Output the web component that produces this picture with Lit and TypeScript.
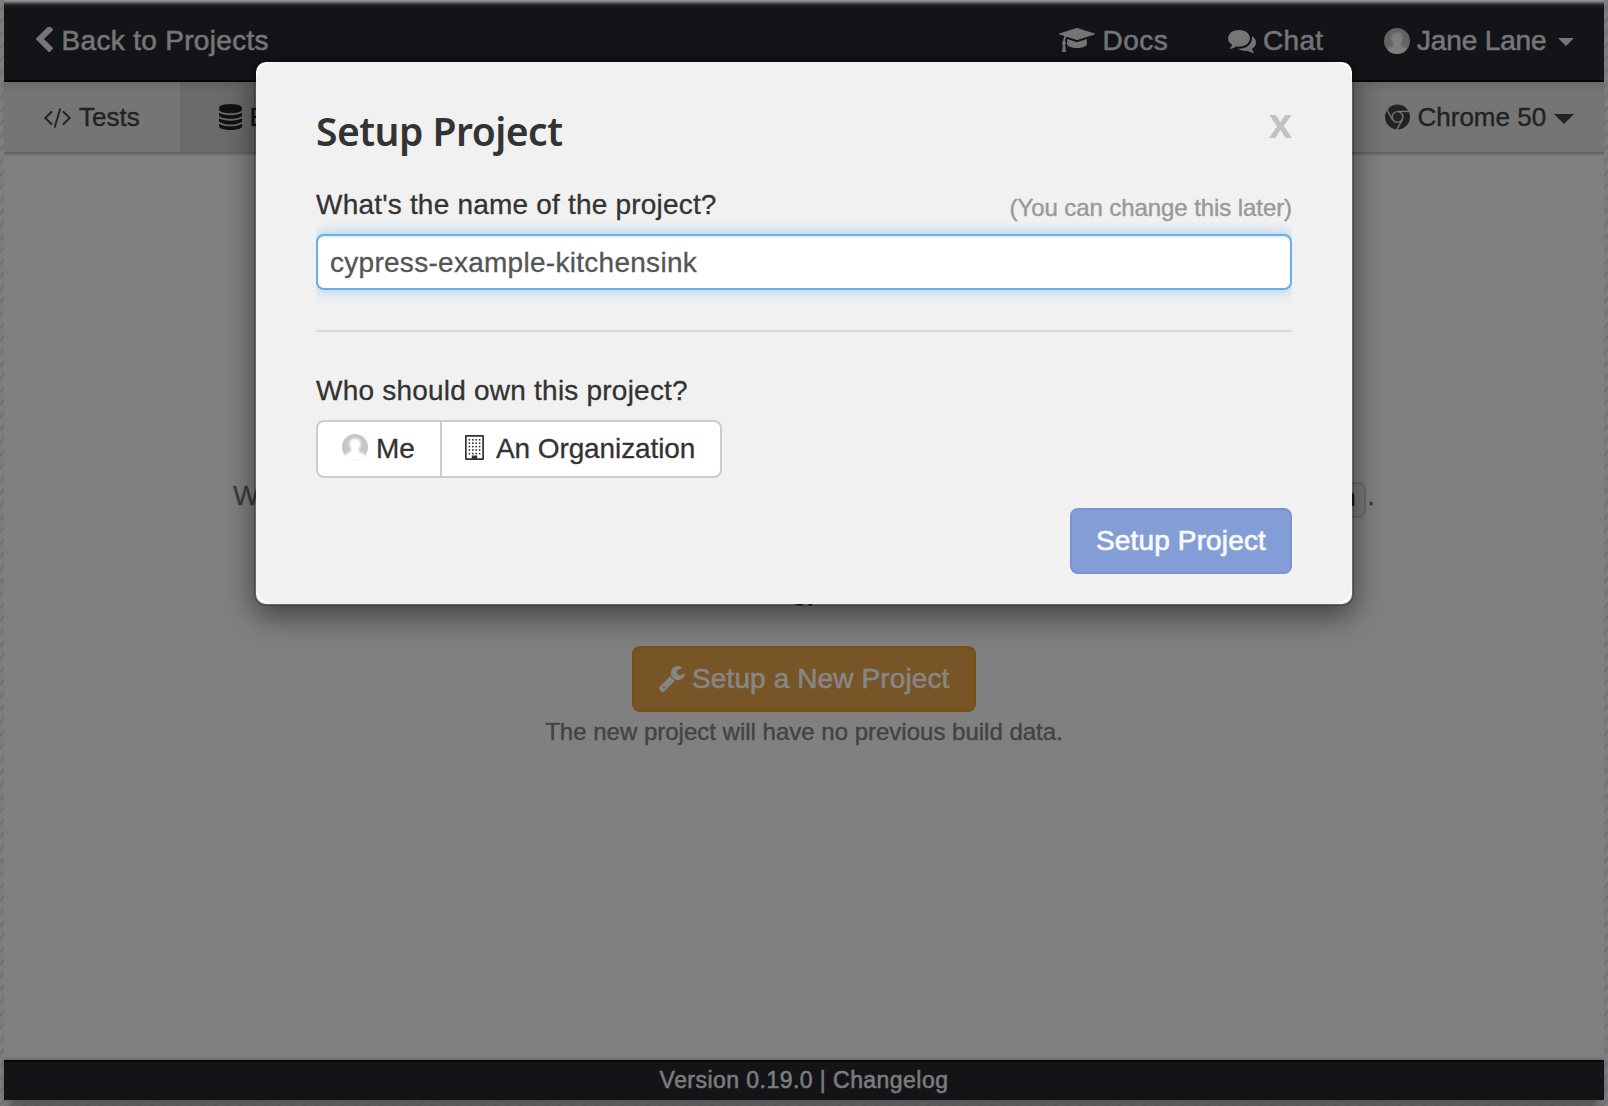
import { LitElement, html, css, svg } from "lit";
import { customElement, property } from "lit/decorators.js";

const ICONS: Record<string, { box: string; d: string }> = {
  back: {
    box: "410 90 1037 1612",
    d: "M1427 301l-531 531 531 531q19 19 19 45t-19 45l-166 166q-19 19-45 19t-45-19l-742-742q-19-19-19-45t19-45l742-742q19-19 45-19t45 19l166 166q19 19 19 45t-19 45z",
  },
  code: {
    box: "-20 256 1832 1408",
    d: "M553 1399l-50 50q-10 10-23 10t-23-10l-466-466q-10-10-10-23t10-23l466-466q10-10 23-10t23 10l50 50q10 10 10 23t-10 23l-393 393 393 393q10 10 10 23t-10 23zm591-1067l-373 1291q-4 13-15.5 19.5t-23.5 2.5l-62-17q-13-4-19.5-15.5t-2.5-24.5l373-1291q4-13 15.5-19.5t23.5-2.5l62 17q13 4 19.5 15.5t2.5 24.5zm657 651l-466 466q-10 10-23 10t-23-10l-50-50q-10-10-10-23t10-23l393-393-393-393q-10-10-10-23t10-23l50-50q10-10 23-10t23 10l466 466q10 10 10 23t-10 23z",
  },
  database: {
    box: "128 0 1536 1792",
    d: "M896 768q237 0 443-43t325-127v170q0 69-103 128t-280 93.5-385 34.5-385-34.5-280-93.5-103-128v-170q119 84 325 127t443 43zm0 768q237 0 443-43t325-127v170q0 69-103 128t-280 93.5-385 34.5-385-34.5-280-93.5-103-128v-170q119 84 325 127t443 43zm0-384q237 0 443-43t325-127v170q0 69-103 128t-280 93.5-385 34.5-385-34.5-280-93.5-103-128v-170q119 84 325 127t443 43zm0-1152q208 0 385 34.5t280 93.5 103 128v128q0 69-103 128t-280 93.5-385 34.5-385-34.5-280-93.5-103-128v-128q0-69 103-128t280-93.5 385-34.5z",
  },
  docs: {
    box: "0 128 2304 1536",
    d: "M1774 836l18 316q4 69-82 128t-235 93.5-323 34.5-323-34.5-235-93.5-82-128l18-316 574 181q22 7 48 7t48-7zM2304 512q0 23-22 31l-1120 352q-4 1-10 1t-10-1l-652-206q-43 34-71 111.5t-34 178.5q63 36 63 109 0 69-58 107l58 433q2 14-8 25-9 11-24 11h-192q-15 0-24-11-10-11-8-25l58-433q-58-38-58-107 0-73 65-111 11-207 98-330l-333-104q-22-8-22-31t22-31l1120-352q4-1 10-1t10 1l1120 352q22 8 22 31z",
  },
  chat: {
    box: "0 256 1792 1408",
    d: "M1408 768q0 139-94 257t-256.5 186.5-353.5 68.5q-86 0-176-16-124 88-278 128-36 9-86 16h-3q-11 0-20.5-8t-11.5-21q-1-3-1-6.5t.5-6.5 2-6l2.5-5 3.5-5.5 4-5 4.5-5 4-4.5q5-6 23-25t26-29.5 22.5-29 25-38.5 20.5-44q-124-72-195-177t-71-224q0-139 94-257t256.5-186.5 353.5-68.5 353.5 68.5 256.5 186.5 94 257zm384 256q0 120-71 224.5t-195 176.5q10 24 20.5 44t25 38.5 22.5 29 26 29.5 23 25q1 1 4 4.5t4.5 5 4 5 3.5 5.5l2.5 5 2 6 .5 6.5-1 6.5q-3 14-13 22t-22 7q-50-7-86-16-154-40-278-128-90 16-176 16-271 0-472-132 58 4 88 4 161 0 309-45t264-129q125-92 192-212t67-254q0-77-23-152 129 71 204 178t75 230z",
  },
  wrench: {
    box: "85 128 1641 1643",
    d: "M448 1472q0-26-19-45t-45-19-45 19-19 45 19 45 45 19 45-19 19-45zm644-420l-682 682q-37 37-90 37-52 0-91-37l-106-108q-38-36-38-90 0-53 38-91l681-681q39 98 114.5 173.5t173.5 114.5zm634-435q0 39-23 106-47 134-164.5 217.5t-258.5 83.5q-185 0-316.5-131.5t-131.5-316.5 131.5-316.5 316.5-131.5q58 0 121.5 16.5t107.5 46.5q16 11 16 28t-16 28l-293 169v224l193 107q5-3 79-48.5t135.5-81 70.5-35.5q15 0 23.5 10t8.5 25z",
  },
  caret: { box: "0 0 20 10", d: "M0 0H20L10 10z" },
};

@customElement("ui-icon")
export class UiIcon extends LitElement {
  @property() name = "";

  static styles = css`
    :host { display: block; flex: none; }
    .glyph { display: block; width: 100%; height: 100%; fill: currentColor; stroke: none; }
    .gaps { fill: none; stroke: #757575; stroke-width: 1.5; }
  `;

  render() {
    if (this.name === "chrome") {
      return html`<svg class="glyph" viewBox="0 0 26 26">
        <circle cx="13" cy="13" r="13"></circle>
        <g class="gaps">
          <circle cx="13" cy="13" r="5.6"></circle>
          ${[0, 120, 240].map((a) => svg`<path d="M13 7.2H26" transform="rotate(${a} 13 13)"></path>`)}
        </g>
      </svg>`;
    }
    if (this.name === "building") {
      const cols = [4.4, 7.8, 11.2, 14.6];
      const rows = [4.8, 8.2, 11.6, 15, 18.6];
      return html`<svg class="glyph" viewBox="0 0 19 25">
        <path d="M0 1a1 1 0 0 1 1-1H18a1 1 0 0 1 1 1V24a1 1 0 0 1-1 1H1a1 1 0 0 1-1-1zM1.7 1.7V23.3H6.8V20.5H12.2V23.3H17.3V1.7z" fill-rule="evenodd"></path>
        ${rows.map((y) => cols.map((x) => svg`<rect x=${x - 0.8} y=${y - 0.8} width="1.6" height="1.6"></rect>`))}
      </svg>`;
    }
    const icon = ICONS[this.name];
    if (!icon) return html``;
    return html`<svg class="glyph" viewBox=${icon.box} preserveAspectRatio="none"><path d=${icon.d}></path></svg>`;
  }
}

@customElement("user-avatar")
export class UserAvatar extends LitElement {
  static styles = css`
    :host { display: block; flex: none; width: 26px; height: 26px; border-radius: 50%; overflow: hidden; }
    .pic { display: block; width: 100%; height: 100%; stroke: none; }
    .back { fill: var(--avatar-back); }
    .person { fill: var(--avatar-person); filter: blur(0.8px); }
  `;

  render() {
    return html`<svg class="pic" viewBox="0 0 26 26">
      <rect class="back" width="26" height="26"></rect>
      <path class="person" d="M13 4.5C17 4.5 18.8 7.2 18.6 10.5C18.4 13 17.2 14.2 16.6 15.6C16.6 17.6 18 18.2 20.5 19.2C23 20.2 24 22 24.5 27H1.5C2 22 3 20.2 5.5 19.2C8 18.2 9.4 17.6 9.4 15.6C8.8 14.2 7.6 13 7.4 10.5C7.2 7.2 9 4.5 13 4.5z"></path>
    </svg>`;
  }
}

@customElement("app-root")
export class AppRoot extends LitElement {
  static styles = css`
    :host {
      display: block;
      position: relative;
      box-sizing: border-box;
      width: 1608px;
      height: 1106px;
      padding: 0 4px 6px;
      overflow: hidden;
      font: 28px/40px "Liberation Sans", Arial, sans-serif;
      color: #333;
      background:
        linear-gradient(90deg, rgba(70, 70, 70, 0) 2px, rgba(70, 70, 70, 0.6) 16px 1592px, rgba(70, 70, 70, 0) 1606px) 0 1100px / 100% 6px no-repeat,
        repeating-linear-gradient(135deg, #7e7e7e 0 5px, #747474 6px 8px, #7e7e7e 9px);
    }
    * { box-sizing: border-box; }
    .window { display: flex; flex-direction: column; height: 1100px; background: #808080; }
    .text { white-space: nowrap; }

    .navbar {
      display: flex;
      align-items: center;
      height: 82px;
      flex: none;
      padding: 1px 30px 0 32px;
      border-bottom: 2px solid #070708;
      color: #757678;
      -webkit-text-stroke: 0.6px #757678;
      background: linear-gradient(#98999b 0, #77787a 2px, #333438 4px, #1a1b1f 6px, #131418 9px);
    }
    .nav-back { display: flex; align-items: center; gap: 8.5px; letter-spacing: 0.32px; margin-right: auto; }
    .ico-back { width: 17px; height: 26px; margin-top: -2px; }
    .nav-item { display: flex; align-items: center; }
    .nav-docs { gap: 7.5px; width: 168.5px; letter-spacing: 0.5px; }
    .ico-docs { width: 36px; height: 24px; margin-top: -1px; }
    .nav-chat { gap: 7.5px; width: 156.5px; letter-spacing: 0.3px; }
    .ico-chat { width: 28px; height: 23px; margin-top: 1px; }
    .nav-user { gap: 7px; width: 190px; letter-spacing: -0.15px; }
    .nav-user .ico-caret { width: 16px; height: 8px; margin: 3px 0 0 auto; }
    .dim { --avatar-back: #636363; --avatar-person: #7f7f7f; margin-top: 1px; }

    .tabs {
      display: flex;
      height: 72px;
      flex: none;
      border-bottom: 2px solid #646464;
      font-size: 26px;
      color: #222;
      -webkit-text-stroke: 0.4px #222;
      background: linear-gradient(#6a6a6a, #757575 10px);
      box-shadow: 0 1px 2px rgba(0, 0, 0, 0.12);
    }
    .tab { display: flex; align-items: center; }
    .tab-tests { width: 176px; padding-left: 40px; gap: 8px; }
    .ico-code { width: 27px; height: 20px; margin-top: 1px; }
    .tab-builds { width: 180px; padding-left: 38.5px; gap: 8px; color: #111; background: linear-gradient(#606060, #6b6b6b 10px); }
    .ico-db { width: 23px; height: 26px; }
    .tab-browser { margin-left: auto; width: 219.5px; padding-right: 30px; gap: 8px; }
    .ico-chrome { width: 25px; height: 26px; }
    .tab-browser .ico-caret { width: 20px; height: 10px; margin: 4px 0 0 auto; }

    .content { flex: 1; display: flex; flex-direction: column; align-items: center; padding-top: 322px; color: #3d3d3d; }
    .message { display: flex; align-items: center; width: 1142px; height: 40px; -webkit-text-stroke: 0.3px #3d3d3d; }
    .code {
      margin: 8px 1px 0 auto;
      padding: 0 8.5px 0 8px;
      height: 36px;
      font: 700 25px/31px "Liberation Mono", monospace;
      -webkit-text-stroke: 0;
      border: 2px solid #6d6d6d;
      border-radius: 8px;
      color: #1c1c1c;
      background: #7b7b7b;
    }
    .or { margin-top: 60px; color: #1c1c1c; -webkit-text-stroke: 0.8px #1c1c1c; }
    .btn { display: flex; align-items: center; height: 66px; border: 2px solid; border-radius: 8px; }
    .btn-new {
      width: 344px;
      margin-top: 30px;
      padding: 0 0 1px 25px;
      gap: 7px;
      color: #868686;
      -webkit-text-stroke: 0.6px #868686;
      letter-spacing: 0.12px;
      background: #785527;
      border-color: #7a4f16;
    }
    .ico-wrench { width: 26px; height: 26px; margin-top: 0; }
    .note { font-size: 24px; line-height: 36px; margin-top: 2px; color: #434343; -webkit-text-stroke: 0.4px #434343; }

    .footer {
      display: flex;
      justify-content: center;
      height: 40px;
      flex: none;
      border-top: 2px solid #070708;
      background: #131418;
      color: #7c7c7c;
      -webkit-text-stroke: 0.6px #7c7c7c;
      font-size: 23px;
      line-height: 37px;
      letter-spacing: 0.45px;
      box-shadow: 0 -1px 3px rgba(0, 0, 0, 0.25);
      position: relative;
    }

    .modal {
      position: absolute;
      left: 254px;
      top: 60px;
      width: 1100px;
      border: 2px solid rgba(0, 0, 0, 0.2);
      border-radius: 12px;
      background: #fff;
      background-clip: padding-box;
      box-shadow: 0 10px 30px rgba(0, 0, 0, 0.5);
    }
    .dialog { padding: 39px 60px 30px; border-radius: 18px; background: #f1f1f1; }
    .dialog-head { display: flex; justify-content: space-between; height: 60px; }
    .title { margin: 0; font: 600 39px/59px "Noto Sans", "Open Sans", sans-serif; letter-spacing: -0.5px; color: #333; }
    .close { font-size: 42px; line-height: 46px; font-weight: 700; color: #c1c1c1; }
    .label-row { display: flex; justify-content: space-between; height: 40px; margin-top: 23px; padding-top: 1px; letter-spacing: 0.2px; -webkit-text-stroke: 0.3px #333; }
    .hint { font-size: 24px; line-height: 46px; letter-spacing: -0.08px; color: #999; -webkit-text-stroke: 0.4px #999; }
    .input {
      display: flex;
      align-items: center;
      height: 56px;
      margin-top: 10px;
      padding: 1px 0 0 12px;
      border: 2px solid #66afe9;
      border-radius: 8px;
      color: #555;
      -webkit-text-stroke: 0.3px #555;
      letter-spacing: 0.28px;
      background: #fff;
      box-shadow: inset 0 2px 2px rgba(0, 0, 0, 0.075), 0 0 14px rgba(102, 175, 233, 0.6);
      clip-path: inset(-16px 0);
    }
    .rule { height: 2px; margin-top: 40px; background: #dadada; }
    .owner { height: 40px; padding-top: 1px; margin-top: 38px; letter-spacing: 0.22px; -webkit-text-stroke: 0.3px #333; }
    .group { display: flex; width: 406px; height: 58px; margin-top: 10px; border: 2px solid #ccc; border-radius: 8px; background: #fff; -webkit-text-stroke: 0.3px #333; }
    .choice { display: flex; align-items: center; padding-bottom: 1px; }
    .choice-me { width: 124px; padding-left: 24px; gap: 8px; border-right: 2px solid #ccc; }
    .choice-org { padding-left: 23px; gap: 12px; letter-spacing: -0.1px; }
    .lit { --avatar-back: #c6c6c6; --avatar-person: #fff; margin-top: -3px; }
    .ico-building { width: 19px; height: 25px; margin-top: -2px; }
    .actions { display: flex; justify-content: flex-end; margin-top: 30px; }
    .btn-setup {
      width: 222px;
      justify-content: center;
      padding-bottom: 0;
      color: #fafafa;
      -webkit-text-stroke: 0.7px #fafafa;
      letter-spacing: 0.15px;
      background: #839dd7;
      border-color: #7892d3;
    }
  `;

  render() {
    return html`
      <div class="window">
        <header class="navbar">
          <div class="nav-back"><ui-icon class="ico-back" name="back"></ui-icon><span class="text">Back to Projects</span></div>
          <div class="nav-item nav-docs"><ui-icon class="ico-docs" name="docs"></ui-icon><span class="text">Docs</span></div>
          <div class="nav-item nav-chat"><ui-icon class="ico-chat" name="chat"></ui-icon><span class="text">Chat</span></div>
          <div class="nav-item nav-user">
            <user-avatar class="dim"></user-avatar><span class="text">Jane Lane</span><ui-icon class="ico-caret" name="caret"></ui-icon>
          </div>
        </header>
        <nav class="tabs">
          <div class="tab tab-tests"><ui-icon class="ico-code" name="code"></ui-icon><span class="text">Tests</span></div>
          <div class="tab tab-builds"><ui-icon class="ico-db" name="database"></ui-icon><span class="text">B</span></div>
          <div class="tab tab-browser">
            <ui-icon class="ico-chrome" name="chrome"></ui-icon><span class="text">Chrome 50</span><ui-icon class="ico-caret" name="caret"></ui-icon>
          </div>
        </nav>
        <main class="content">
          <div class="message"><span class="text">W</span><span class="code">n</span><span class="text">.</span></div>
          <div class="or">or</div>
          <div class="btn btn-new"><ui-icon class="ico-wrench" name="wrench"></ui-icon><span class="text">Setup a New Project</span></div>
          <div class="note">The new project will have no previous build data.</div>
        </main>
        <footer class="footer"><span class="text">Version 0.19.0 | Changelog</span></footer>
      </div>
      <div class="modal">
        <div class="dialog">
          <div class="dialog-head"><h4 class="title">Setup Project</h4><span class="close">x</span></div>
          <div class="label-row"><span class="text">What's the name of the project?</span><span class="text hint">(You can change this later)</span></div>
          <div class="input"><span class="text">cypress-example-kitchensink</span></div>
          <div class="rule"></div>
          <div class="owner">Who should own this project?</div>
          <div class="group">
            <div class="choice choice-me"><user-avatar class="lit"></user-avatar><span class="text">Me</span></div>
            <div class="choice choice-org"><ui-icon class="ico-building" name="building"></ui-icon><span class="text">An Organization</span></div>
          </div>
          <div class="actions"><div class="btn btn-setup"><span class="text">Setup Project</span></div></div>
        </div>
      </div>
    `;
  }
}
